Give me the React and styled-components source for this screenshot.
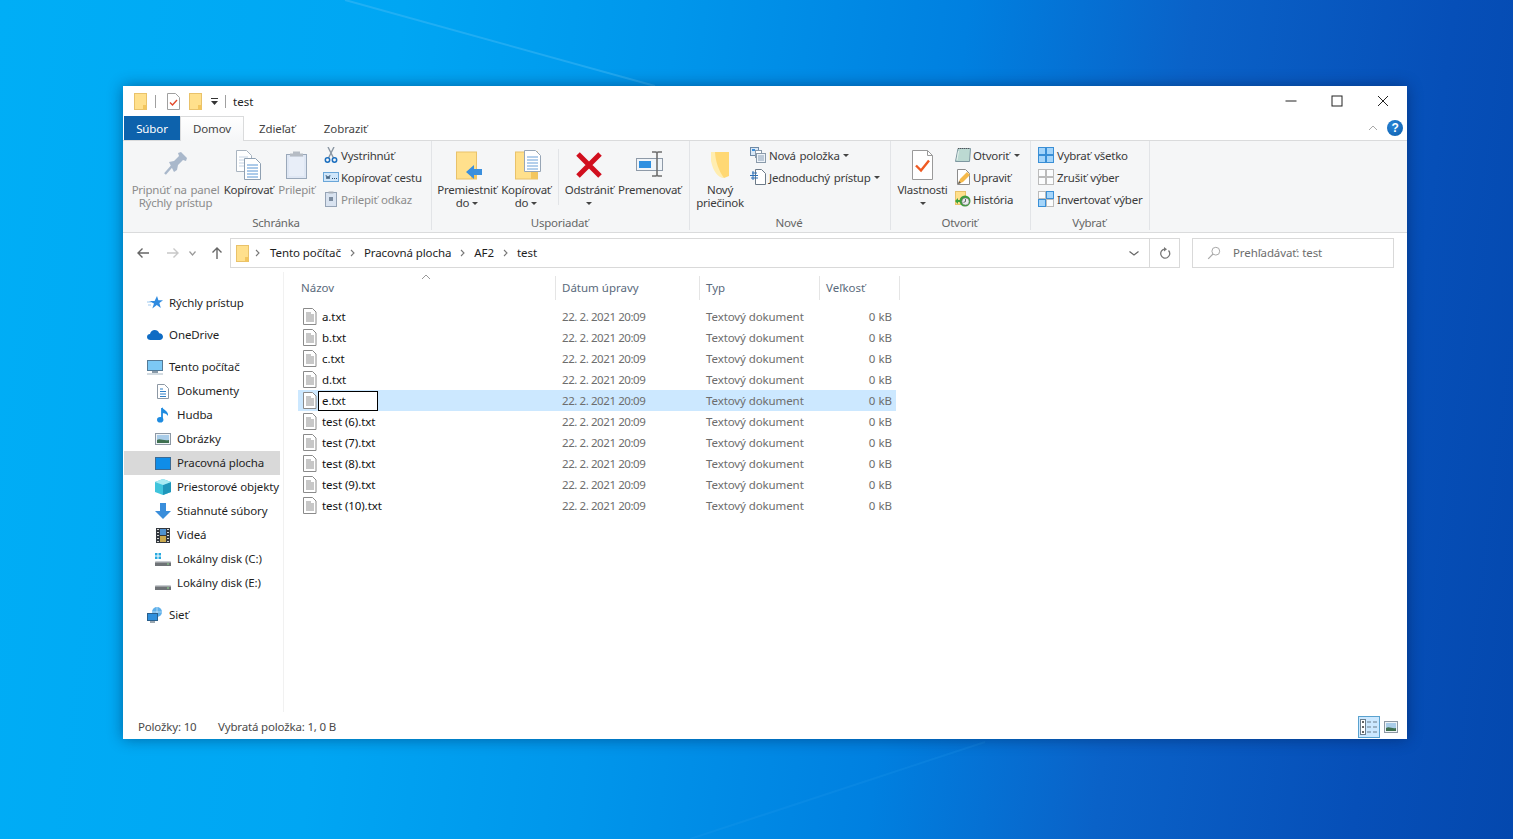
import React from 'react';
import styled, { createGlobalStyle } from 'styled-components';

const Global = createGlobalStyle`
  html, body { margin: 0; padding: 0; height: 100%; overflow: hidden; }
  body { font-family: "Noto Sans", "Open Sans", sans-serif; font-size: 11.5px; }
  * { box-sizing: border-box; }
`;

const Desktop = styled.div`
  position: relative;
  width: 1513px;
  height: 839px;
  padding: 86px 106px 100px 123px;
  background: linear-gradient(97deg, #00aef6 0%, #00a6f3 25%, #0096eb 42%, #0080e0 60%, #0a62c8 74%, #064fb8 90%, #0448ae 100%);
`;
const Rays = styled.svg`
  position: absolute;
  inset: 0;
  pointer-events: none;
`;
const Window = styled.div`
  position: relative;
  height: 653px;
  background: #fff;
  display: flex;
  flex-direction: column;
  box-shadow: 0 0 14px rgba(0, 20, 60, 0.45);
`;

/* Title bar */
const TitleBar = styled.div`
  height: 30px;
  display: flex;
  align-items: center;
  padding-left: 11px;
`;
const QatSep = styled.span`
  width: 1px;
  height: 13px;
  background: #a0a0a0;
  margin: 0 ${p => p.$r}px 0 ${p => p.$l}px;
`;
const QatItem = styled.span`
  display: flex;
  margin-right: ${p => p.$mr || 0}px;
`;
const TitleText = styled.span`
  color: #222;
`;
const WinControls = styled.div`
  margin-left: auto;
  display: flex;
  padding-right: 1px;
`;
const WinBtn = styled.span`
  width: 46px;
  height: 30px;
  display: flex;
  align-items: center;
  justify-content: center;
`;

/* Tabs */
const TabRow = styled.div`
  height: 25px;
  display: flex;
  padding-left: 1px;
  border-bottom: 1px solid #dadbdc;
  letter-spacing: -0.1px;
`;
const FileTab = styled.div`
  width: 56px;
  height: 24px;
  background: #0d62ac;
  color: #fff;
  display: flex;
  align-items: center;
  justify-content: center;
`;
const Tab = styled.div`
  width: ${p => p.$w}px;
  height: ${p => (p.$active ? 25 : 24)}px;
  display: flex;
  align-items: center;
  justify-content: center;
  color: #444;
  background: #fff;
  ${p => p.$active && `
    padding-bottom: 2px;
    border: 1px solid #dadbdc;
    border-bottom: 0;
    background: linear-gradient(#fff, #f5f6f7);
  `}
`;
const TabRight = styled.div`
  margin-left: auto;
  display: flex;
  align-items: center;
  gap: 9px;
  padding-right: 4px;
`;
const HelpBadge = styled.span`
  width: 16px;
  height: 16px;
  border-radius: 50%;
  background: radial-gradient(circle at 40% 35%, #2a86d8, #0b5cab);
  color: #fff;
  font: bold 12px/16px "Liberation Sans", sans-serif;
  text-align: center;
`;

/* Ribbon */
const Ribbon = styled.div`
  height: 92px;
  display: flex;
  background: #f5f6f7;
  border-bottom: 1px solid #dadbdc;
  letter-spacing: -0.25px;
  word-spacing: 1px;
`;
const Group = styled.div`
  width: ${p => p.$w}px;
  display: flex;
  flex-direction: column;
  border-right: 1px solid #e2e4e7;
  margin-bottom: 2px;
`;
const GroupBody = styled.div`
  height: 74px;
  display: flex;
  padding-left: ${p => p.$pl}px;
`;
const GroupLabel = styled.div`
  height: 15px;
  line-height: 15px;
  padding-right: 2px;
  text-align: center;
  color: #666;
`;
const BigButton = styled.div`
  width: ${p => p.$w}px;
  padding-top: 6px;
  display: flex;
  flex-direction: column;
  align-items: center;
  color: ${p => (p.$off ? '#8c8c8c' : '#3b3b3b')};
  line-height: 13px;
  text-align: center;
  white-space: nowrap;
`;
const BigIcon = styled.div`
  height: 36px;
  display: flex;
  align-items: center;
  justify-content: center;
`;
const RibbonSep = styled.span`
  width: 1px;
  height: 56px;
  margin: 8px 2px 0 3px;
  background: #e2e4e7;
`;
const SmallCol = styled.div`
  margin: 3px 0 0 ${p => p.$ml || 0}px;
  display: flex;
  flex-direction: column;
`;
const SmallRow = styled.div`
  height: 22px;
  display: flex;
  align-items: center;
  gap: ${p => p.$gap || 2}px;
  padding-left: 1px;
  color: ${p => (p.$off ? '#8c8c8c' : '#3b3b3b')};
  white-space: nowrap;
`;
const Caret = styled.span`
  display: inline-block;
  width: 0;
  height: 0;
  border-left: 3px solid transparent;
  border-right: 3px solid transparent;
  border-top: 3px solid #444;
  margin-left: ${p => p.$ml ?? 3}px;
  vertical-align: 2px;
`;

/* Address row */
const AddressRow = styled.div`
  height: 39px;
  display: flex;
  align-items: flex-start;
  padding: 5px 13px 0 5px;
`;
const NavBtn = styled.span`
  width: ${p => p.$w}px;
  height: 30px;
  margin-right: ${p => p.$mr || 0}px;
  display: flex;
  align-items: center;
  justify-content: center;
`;
const AddressBox = styled.div`
  width: 950px;
  height: 30px;
  display: flex;
  align-items: center;
  border: 1px solid #d9d9d9;
  padding-left: 5px;
  color: #1e1e1e;
  letter-spacing: -0.08px;
`;
const CrumbText = styled.span`
  margin-bottom: 2px;
`;
const ChevronCell = styled.span`
  width: ${p => p.$w || 23}px;
  padding-right: ${p => p.$pr || 0}px;
  display: flex;
  justify-content: center;
`;
const DropCell = styled.span`
  margin-left: auto;
  width: 30px;
  height: 28px;
  display: flex;
  align-items: center;
  justify-content: center;
`;
const RefreshCell = styled.span`
  width: 30px;
  height: 28px;
  display: flex;
  align-items: center;
  justify-content: center;
  border-left: 1px solid #d9d9d9;
`;
const SearchBox = styled.div`
  width: 202px;
  height: 30px;
  margin-left: 12px;
  border: 1px solid #d9d9d9;
  display: flex;
  align-items: center;
  gap: 12px;
  padding-left: 14px;
  color: #6d6d6d;
  letter-spacing: -0.1px;
`;

/* Main */
const Main = styled.div`
  flex: 1;
  display: flex;
  min-height: 0;
`;
const Nav = styled.nav`
  width: 161px;
  padding-top: 19px;
  border-right: 1px solid #f1f1f1;
  margin-bottom: 3px;
`;
const NavGroup = styled.div`
  margin-bottom: 8px;
`;
const NavItem = styled.div`
  height: 24px;
  margin: 0 3px 0 1px;
  padding: 0 0 2px ${p => (p.$sub ? 31 : 23)}px;
  display: flex;
  align-items: center;
  gap: 6px;
  color: #1f1f1f;
  letter-spacing: -0.1px;
  white-space: nowrap;
  background: ${p => (p.$selected ? '#d9d9d9' : 'transparent')};
`;
const NavIconBox = styled.span`
  width: 16px;
  height: 16px;
  margin-top: 2px;
  display: flex;
  align-items: center;
  justify-content: center;
  flex: none;
`;
const Content = styled.div`
  position: relative;
  flex: 1;
  padding: 4px 0 0 14px;
`;
const ListHeader = styled.div`
  display: grid;
  grid-template-columns: 258px 144px 120px 80px;
  width: 602px;
  height: 24px;
  margin-bottom: 6px;
`;
const HeaderCell = styled.div`
  padding: 0 0 2px ${p => p.$pl}px;
  display: flex;
  align-items: center;
  color: #5a6a7c;
  border-right: 1px solid #e5e5e5;
`;
const SortMark = styled.svg`
  position: absolute;
  left: 137px;
  top: 2px;
`;
const FileRow = styled.div`
  display: grid;
  grid-template-columns: 258px 144px 120px 76px;
  width: 598px;
  height: 21px;
  align-items: center;
  background: ${p => (p.$selected ? '#cce8ff' : 'transparent')};
`;
const NameCell = styled.div`
  display: flex;
  align-items: center;
  gap: 5px;
  padding-left: 5px;
  color: #111;
  letter-spacing: -0.08px;
`;
const NameEditor = styled.span`
  width: 60px;
  height: 20px;
  margin-left: -4px;
  padding-left: 3px;
  line-height: 18px;
  background: #fff;
  border: 1px solid #000;
  color: #111;
`;
const DetailCell = styled.div`
  padding-left: 6px;
  color: #6d6d6d;
  letter-spacing: ${p => p.$ls || 0}px;
`;
const SizeCell = styled.div`
  padding-right: 4px;
  text-align: right;
  color: #6d6d6d;
`;

/* Status bar */
const StatusBar = styled.div`
  height: 24px;
  display: flex;
  align-items: center;
  padding: 0 9px 0 15px;
  color: #4a4a4a;
  letter-spacing: -0.17px;
`;
const StatusText = styled.span`
  width: ${p => p.$w || 'auto'};
  margin-bottom: 2px;
`;
const ViewSwitch = styled.div`
  margin-left: auto;
  display: flex;
  align-items: center;
  gap: 4px;
`;
const ViewBtn = styled.span`
  width: ${p => (p.$active ? 22 : 14)}px;
  height: 22px;
  display: flex;
  align-items: center;
  justify-content: center;
  background: ${p => (p.$active ? '#cce8ff' : 'transparent')};
  border: ${p => (p.$active ? '1px solid #5aa2cf' : '0')};
`;

/* Icons: each one is a small drawing on its own grid */
const Svg = ({ w, h = w, children }) => (
  <svg width={w} height={h} viewBox={`0 0 ${w} ${h}`} fill="none" shapeRendering="geometricPrecision">{children}</svg>
);

const Y = { fill: '#ffe08c', stroke: '#e9c26a' };

const FolderSmall = () => (
  <Svg w={13} h={17}>
    <rect x="0.5" y="0.5" width="12" height="16" {...Y} />
    <path d="M9 12h3.5v4.5H9z" fill="#f3c65e" />
  </Svg>
);
const QatProps = () => (
  <Svg w={13} h={17}>
    <path d="M.5.5h8l4 4v12H.5z" fill="#fff" stroke="#a0a0a0" />
    <path d="M3 9.5l2.5 2.5L10 7" stroke="#e2482a" strokeWidth="1.4" />
  </Svg>
);
const QatMenu = () => (
  <Svg w={7} h={9}>
    <path d="M0 1.5h7" stroke="#333" />
    <path d="M0 4h7L3.5 8z" fill="#333" />
  </Svg>
);
const Minimize = () => <Svg w={12} h={12}><path d="M.5 6h11" stroke="#222" /></Svg>;
const Maximize = () => <Svg w={12} h={12}><rect x="1" y="1" width="10" height="10" stroke="#222" /></Svg>;
const CloseX = () => <Svg w={12} h={12}><path d="M1 1l10 10M11 1L1 11" stroke="#222" /></Svg>;
const ChevronUp = () => <Svg w={10} h={6}><path d="M1 5l4-4 4 4" stroke="#a8a8a8" /></Svg>;

const Pin = () => (
  <Svg w={32}>
    <path d="M5 25l7-8" stroke="#a9b8cb" strokeWidth="2.4" />
    <path d="M9 13l5-1 5-5-1-3 3-1 6 6-1 3-3-1-5 5-1 5-3 2z" fill="#a9b8cb" />
  </Svg>
);
const CopyBig = () => (
  <Svg w={26} h={30}>
    <path d="M.5.5h10l5 5v16H.5z" fill="#fff" stroke="#a9b4c0" />
    <path d="M3 7h9M3 10h9M3 13h9M3 16h6" stroke="#c4d2e2" />
    <path d="M8.5 8.5h11l5 5v16h-16z" fill="#fff" stroke="#8fa0b2" />
    <path d="M11 15h11M11 18h11M11 21h11M11 24h11M11 27h11" stroke="#5b96d4" />
  </Svg>
);
const PasteBig = () => (
  <Svg w={21} h={28}>
    <rect x="0.5" y="3.5" width="20" height="24" fill="#dfe7f4" stroke="#9aa8ba" />
    <path d="M3 6h15v19H3z" fill="#e8eef8" />
    <path d="M7 .5h7v2h3v3H4v-3h3z" fill="#b6bcc4" />
  </Svg>
);
const Scissors = () => (
  <Svg w={16}>
    <path d="M5 0l5.5 11M11 0L5.5 11" stroke="#8b97a3" strokeWidth="1.4" />
    <circle cx="4.5" cy="13" r="2.2" stroke="#1c6fbf" strokeWidth="1.5" />
    <circle cx="11.5" cy="13" r="2.2" stroke="#1c6fbf" strokeWidth="1.5" />
  </Svg>
);
const CopyPath = () => (
  <Svg w={16}>
    <rect x="0.5" y="3.5" width="15" height="9" fill="#cfe6fa" stroke="#6aa6d8" />
    <path d="M3 6l1 4 1-3 1 3 1-4" stroke="#2a4a6a" strokeWidth=".8" />
    <path d="M9 9.5h1M11 9.5h1M13 9.5h1" stroke="#2a4a6a" />
  </Svg>
);
const PasteLink = () => (
  <Svg w={16}>
    <rect x="2.5" y="1.5" width="11" height="14" fill="#d9e3f0" stroke="#95a3b5" />
    <path d="M5.5.5h5v2h-5z" fill="#a9b0b9" />
    <path d="M6 6h4v4H6z" fill="#7c8c9f" />
  </Svg>
);
const MoveTo = () => (
  <Svg w={30} h={30}>
    <rect x="4.5" y="2" width="20" height="27" {...Y} />
    <path d="M19 23h5.5v6H19z" fill="#f3c65e" />
    <path d="M14 22l8-7v4h8v6h-8v4z" fill="#3a8fdd" />
  </Svg>
);
const CopyTo = () => (
  <Svg w={30} h={30}>
    <rect x="4.5" y="2" width="22" height="27" {...Y} />
    <path d="M20 22h6.5v7H20z" fill="#f3c65e" />
    <path d="M13.5.5h11l5 5v16h-16z" fill="#fff" stroke="#98a6b6" />
    <path d="M16 7h11M16 10h11M16 13h11M16 16h11M16 19h11" stroke="#6aa0d8" />
  </Svg>
);
const DeleteX = () => (
  <Svg w={28}>
    <path d="M3 3l22 22M25 3L3 25" stroke="#d10f1e" strokeWidth="5" />
  </Svg>
);
const Rename = () => (
  <Svg w={30}>
    <rect x="1.5" y="8.5" width="26" height="12" fill="#f0f4f8" stroke="#8e9aa8" />
    <rect x="4" y="11" width="12" height="7" fill="#2e8fe0" />
    <path d="M17 2h4l1 1 1-1h4M22 3v22M17 26h4l1-1 1 1h4" stroke="#6f6f6f" strokeWidth="1.6" />
  </Svg>
);
const NewFolder = () => (
  <Svg w={20} h={28}>
    <path d="M3 1h16v24l-5 2C8 25 4 16 3 8z" fill="#ffd874" />
    <path d="M1 1h4c.5 10 4 19 9 26C8 27 3 20 1 10z" fill="#ffedb0" />
  </Svg>
);
const NewItem = () => (
  <Svg w={16}>
    <rect x="0.5" y="0.5" width="8" height="8" fill="#d9e8f7" stroke="#6f8aa6" />
    <rect x="2" y="2" width="3" height="2" fill="#3a8fdd" />
    <rect x="5.5" y="3.5" width="6" height="7" fill="#fff" stroke="#8a9aaa" />
    <rect x="6.5" y="6.5" width="9" height="9" fill="#eef3f8" stroke="#8a9aaa" />
    <path d="M8 9h6M8 11h6M8 13h6" stroke="#8aa0b8" />
  </Svg>
);
const EasyAccess = () => (
  <Svg w={16}>
    <path d="M5.5.5h6l4 4v11h-10z" fill="#fff" stroke="#6c7a88" />
    <path d="M0 6.5h8M1 9h7M2 4h5" stroke="#2c6fb6" />
    <path d="M3 2v9" stroke="#2c6fb6" />
  </Svg>
);
const PropsBig = () => (
  <Svg w={21} h={30}>
    <path d="M.5.5h15l5 5v24H.5z" fill="#fff" stroke="#9a9a9a" />
    <path d="M15.5.5v5h5" stroke="#9a9a9a" />
    <path d="M4 15.5l5 5 8-10" stroke="#ef5a22" strokeWidth="2.4" />
  </Svg>
);
const OpenIcon = () => (
  <Svg w={16}>
    <path d="M3 1.5h12.5l-1 13H.5z" fill="#bcd9d2" stroke="#7d97a0" />
    <path d="M3 1.5h12" stroke="#555" strokeDasharray="1 1" />
    <path d="M3.5 4L2 13" stroke="#e6f2ee" />
  </Svg>
);
const EditIcon = () => (
  <Svg w={16}>
    <path d="M2.5.5h8l4 4v11h-12z" fill="#fff" stroke="#8c8c8c" />
    <path d="M3 15l2-5 7-7 3 3-7 7z" fill="#f5b94a" />
    <path d="M3 15l1-3 2 2z" fill="#555" />
  </Svg>
);
const HistoryIcon = () => (
  <Svg w={16}>
    <rect x="0.5" y="0.5" width="10" height="13" {...Y} />
    <path d="M3 7l-3 3 3 3v-2h2V9H3z" fill="#3ca43c" />
    <circle cx="10" cy="10" r="5.5" fill="#3e9c3e" />
    <circle cx="10.5" cy="10.5" r="3.6" fill="#e9edf0" stroke="#777" strokeWidth=".6" />
    <path d="M10.5 8v2.6l-2 .8" stroke="#444" strokeWidth=".8" />
  </Svg>
);
const Tile = ({ x, y, on }) => (
  <rect x={x + 0.5} y={y + 0.5} width="7" height="7" fill={on ? '#a5d5fa' : '#fbfcfd'} stroke={on ? '#3a8fd6' : '#bbb'} />
);
const Tiles = ({ on }) => (
  <Svg w={16}>
    <Tile x={0} y={0} on={on[0]} />
    <Tile x={8} y={0} on={on[1]} />
    <Tile x={0} y={8} on={on[2]} />
    <Tile x={8} y={8} on={on[3]} />
  </Svg>
);

const ArrowLeft = ({ c }) => <Svg w={14} h={12}><path d="M13 6H2M6.5 1.5L2 6l4.5 4.5" stroke={c} strokeWidth="1.4" /></Svg>;
const ArrowRight = ({ c }) => <Svg w={14} h={12}><path d="M1 6h11M7.5 1.5L12 6l-4.5 4.5" stroke={c} strokeWidth="1.4" /></Svg>;
const ArrowUp = () => <Svg w={12} h={14}><path d="M6 13V2M1.5 6.5L6 2l4.5 4.5" stroke="#666" strokeWidth="1.4" /></Svg>;
const ChevDown = ({ c = '#888', w = 8 }) => <Svg w={w} h={5}><path d={`M.5 .5L${w / 2} 4l${w / 2 - 0.5}-3.5`} stroke={c} strokeWidth="1.2" /></Svg>;
const ChevRight = () => <Svg w={5} h={8}><path d="M1 1l3 3-3 3" stroke="#777" strokeWidth="1.1" /></Svg>;
const Refresh = () => <Svg w={12} h={13}><path d="M9.5 3.5a4.5 4.5 0 1 1-3.5-1.4" stroke="#777" strokeWidth="1.3" /><path d="M5 0l3 2.2L5 4.4z" fill="#777" /></Svg>;
const SearchGlass = () => <Svg w={14} h={14}><circle cx="8.8" cy="5.2" r="3.9" stroke="#a8a8a8" /><path d="M6 8L1.2 12.8" stroke="#a8a8a8" strokeWidth="1.2" /></Svg>;

const Star = () => <Svg w={16}><path d="M10 1l1.4 4.2H16l-3.6 2.9 1.4 4.9-4-3-4.5 3.5 1.7-5L2 6h5.6z" fill="#2f8be0" /><path d="M0 7h4M1 10h3" stroke="#9fcaf0" /></Svg>;
const Cloud = () => <Svg w={16} h={12}><path d="M3.5 11C1.5 11 0 9.8 0 8c0-1.7 1.3-3 3-3 .6-2.5 2.5-4 4.6-4 2.2 0 3.8 1.2 4.6 3.2 2.2 0 3.8 1.6 3.8 3.5 0 1.9-1.4 3.3-3.3 3.3z" fill="#0f6cc4" /></Svg>;
const Pc = () => <Svg w={16}><rect x="0.5" y="1.5" width="15" height="10" fill="#7cc8f5" stroke="#557a96" /><path d="M5 13h6" stroke="#8a9aa8" strokeWidth="2" /><path d="M0 15h16" stroke="#a8b8c4" /></Svg>;
const DocNav = () => <Svg w={12} h={15}><path d="M.5.5h7l4 4v10H.5z" fill="#fff" stroke="#8d98a4" /><path d="M3 5h3M3 7.5h6M3 10h6M3 12.5h6" stroke="#2f7fc7" /></Svg>;
const Music = () => <Svg w={12} h={16}><path d="M5 1v11" stroke="#1e8be0" strokeWidth="1.8" /><path d="M5 0c1 3 7 4 6 9-.8-2-3.5-3-6-3z" fill="#1e8be0" /><ellipse cx="3.2" cy="12.8" rx="3.2" ry="2.8" fill="#1e8be0" /></Svg>;
const Picture = ({ size = 16, h = 12 }) => <Svg w={size} h={h}><rect x="0.5" y="0.5" width={size - 1} height={h - 1} fill="#eef3f7" stroke="#8d98a4" /><rect x="2" y="2" width={size - 4} height={h - 4} fill="#a9cce8" /><path d={`M2 ${h - 2}V${h / 2 + 1}c3-2 6 1 ${size - 4} 0V${h - 2}z`} fill="#3f7050" /></Svg>;
const DesktopIcon = () => <Svg w={16} h={13}><rect x="0.5" y="0.5" width="15" height="12" fill="#0f8de8" stroke="#3a6a94" /></Svg>;
const Cube = () => <Svg w={16}><path d="M8 0l8 3v10l-8 3-8-3V3z" fill="#3fc4dc" /><path d="M8 6l8-3v10l-8 3z" fill="#1f97bb" /><path d="M8 0l8 3-8 3-8-3z" fill="#a8ebf3" /></Svg>;
const Download = () => <Svg w={16}><path d="M5 0h6v8h5l-8 8-8-8h5z" fill="#3a8edb" /></Svg>;
const Video = () => <Svg w={14} h={15}><rect width="14" height="15" fill="#33383e" /><path d="M1 1.5h2M1 4.5h2M1 7.5h2M1 10.5h2M1 13.5h2M11 1.5h2M11 4.5h2M11 7.5h2M11 10.5h2M11 13.5h2" stroke="#d8d8d8" /><rect x="4" y="1" width="6" height="6" fill="#4f92d0" /><rect x="4" y="8" width="6" height="6" fill="#c9a94f" /></Svg>;
const Disk = ({ win }) => (
  <Svg w={16} h={14}>
    {win && <path d="M0 1h2.5v2.5H0zM3.5 1H6v2.5H3.5zM0 4.5h2.5V7H0zM3.5 4.5H6V7H3.5z" fill="#27a9e0" />}
    <path d="M1 9h14l1 2v3H0v-3z" fill="#6f7377" />
    <path d="M1 9h14l.5 1.5H.5z" fill="#c8ccd0" />
    <path d="M12 12h2" stroke="#8fe08f" />
  </Svg>
);
const Network = () => (
  <Svg w={16}>
    <circle cx="10" cy="5" r="5" fill="#5fb0ea" />
    <path d="M5 5h10M10 0v10" stroke="#e4f2fb" strokeWidth=".6" />
    <rect x="0.5" y="6.5" width="10" height="7" fill="#2f8fdc" stroke="#2a5f8c" />
    <path d="M3 15h5" stroke="#70828f" strokeWidth="1.4" />
  </Svg>
);
const FileIcon = () => (
  <Svg w={14} h={17}>
    <path d="M.5.5h9l3.5 3.5v12.5H.5z" fill="#fff" stroke="#8a8a8a" />
    <path d="M3 5h5M3 7h8M3 9h8M3 11h8M3 13h8" stroke="#8f8f8f" />
  </Svg>
);
const DetailsView = () => (
  <Svg w={18} h={16}>
    <rect x="0.5" y="0.5" width="5" height="15" fill="#fff" stroke="#6b7d8c" />
    <path d="M2 3h2M2 8h2M2 13h2" stroke="#333" strokeWidth="1.4" />
    <path d="M7 3h4M13 3h4M7 8h4M13 8h4M7 13h4M13 13h4" stroke="#6b7d8c" />
  </Svg>
);

const navGroups = [
  [{ icon: <Star />, label: 'Rýchly prístup' }],
  [{ icon: <Cloud />, label: 'OneDrive' }],
  [
    { icon: <Pc />, label: 'Tento počítač' },
    { icon: <DocNav />, label: 'Dokumenty', sub: true },
    { icon: <Music />, label: 'Hudba', sub: true },
    { icon: <Picture />, label: 'Obrázky', sub: true },
    { icon: <DesktopIcon />, label: 'Pracovná plocha', sub: true, selected: true },
    { icon: <Cube />, label: 'Priestorové objekty', sub: true },
    { icon: <Download />, label: 'Stiahnuté súbory', sub: true },
    { icon: <Video />, label: 'Videá', sub: true },
    { icon: <Disk win />, label: 'Lokálny disk (C:)', sub: true },
    { icon: <Disk />, label: 'Lokálny disk (E:)', sub: true },
  ],
  [{ icon: <Network />, label: 'Sieť' }],
];

const files = ['a.txt', 'b.txt', 'c.txt', 'd.txt', 'e.txt', 'test (6).txt', 'test (7).txt', 'test (8).txt', 'test (9).txt', 'test (10).txt'];

export default function App() {
  return (
    <Desktop>
      <Global />
      <Rays width="1513" height="839" viewBox="0 0 1513 839">
        <path d="M345 0L655 86" stroke="#4fbdf5" strokeOpacity=".4" strokeWidth="2" />
        <path d="M985 742L690 839" stroke="#2fa0ee" strokeOpacity=".18" strokeWidth="2" />
      </Rays>
      <Window>
        <TitleBar>
          <QatItem><FolderSmall /></QatItem>
          <QatSep $l={8} $r={11} />
          <QatItem $mr={9}><QatProps /></QatItem>
          <QatItem $mr={9}><FolderSmall /></QatItem>
          <QatItem><QatMenu /></QatItem>
          <QatSep $l={7} $r={7} />
          <TitleText>test</TitleText>
          <WinControls>
            <WinBtn><Minimize /></WinBtn>
            <WinBtn><Maximize /></WinBtn>
            <WinBtn><CloseX /></WinBtn>
          </WinControls>
        </TitleBar>

        <TabRow>
          <FileTab>Súbor</FileTab>
          <Tab $active $w={64}>Domov</Tab>
          <Tab $w={66}>Zdieľať</Tab>
          <Tab $w={71}>Zobraziť</Tab>
          <TabRight>
            <ChevronUp />
            <HelpBadge>?</HelpBadge>
          </TabRight>
        </TabRow>

        <Ribbon>
          <Group $w={309}>
            <GroupBody $pl={7}>
              <BigButton $w={91} $off><BigIcon><Pin /></BigIcon>Pripnúť na panel<br />Rýchly prístup</BigButton>
              <BigButton $w={55}><BigIcon><CopyBig /></BigIcon>Kopírovať</BigButton>
              <BigButton $w={41} $off><BigIcon><PasteBig /></BigIcon>Prilepiť</BigButton>
              <SmallCol $ml={5}>
                <SmallRow><Scissors />Vystrihnúť</SmallRow>
                <SmallRow><CopyPath />Kopírovať cestu</SmallRow>
                <SmallRow $off><PasteLink />Prilepiť odkaz</SmallRow>
              </SmallCol>
            </GroupBody>
            <GroupLabel>Schránka</GroupLabel>
          </Group>

          <Group $w={258}>
            <GroupBody $pl={5}>
              <BigButton $w={60}><BigIcon><MoveTo /></BigIcon>Premiestniť<span>do<Caret /></span></BigButton>
              <BigButton $w={58}><BigIcon><CopyTo /></BigIcon>Kopírovať<span>do<Caret /></span></BigButton>
              <RibbonSep />
              <BigButton $w={56}><BigIcon><DeleteX /></BigIcon>Odstrániť<span><Caret $ml={0} /></span></BigButton>
              <BigButton $w={65}><BigIcon><Rename /></BigIcon>Premenovať</BigButton>
            </GroupBody>
            <GroupLabel>Usporiadať</GroupLabel>
          </Group>

          <Group $w={201}>
            <GroupBody $pl={5}>
              <BigButton $w={50}><BigIcon><NewFolder /></BigIcon>Nový<br />priečinok</BigButton>
              <SmallCol $ml={4}>
                <SmallRow $gap={3}><NewItem />Nová položka<Caret $ml={0} /></SmallRow>
                <SmallRow $gap={3}><EasyAccess />Jednoduchý prístup<Caret $ml={0} /></SmallRow>
              </SmallCol>
            </GroupBody>
            <GroupLabel>Nové</GroupLabel>
          </Group>

          <Group $w={140}>
            <GroupBody $pl={4}>
              <BigButton $w={55}><BigIcon><PropsBig /></BigIcon>Vlastnosti<span><Caret $ml={0} /></span></BigButton>
              <SmallCol $ml={4}>
                <SmallRow><OpenIcon />Otvoriť<Caret /></SmallRow>
                <SmallRow><EditIcon />Upraviť</SmallRow>
                <SmallRow><HistoryIcon />História</SmallRow>
              </SmallCol>
            </GroupBody>
            <GroupLabel>Otvoriť</GroupLabel>
          </Group>

          <Group $w={119}>
            <GroupBody $pl={0}>
              <SmallCol $ml={6}>
                <SmallRow $gap={3}><Tiles on={[1, 1, 1, 1]} />Vybrať všetko</SmallRow>
                <SmallRow $gap={3}><Tiles on={[0, 0, 0, 0]} />Zrušiť výber</SmallRow>
                <SmallRow $gap={3}><Tiles on={[0, 1, 1, 0]} />Invertovať výber</SmallRow>
              </SmallCol>
            </GroupBody>
            <GroupLabel>Vybrať</GroupLabel>
          </Group>
        </Ribbon>

        <AddressRow>
          <NavBtn $w={30}><ArrowLeft c="#666" /></NavBtn>
          <NavBtn $w={30}><ArrowRight c="#c8c8c8" /></NavBtn>
          <NavBtn $w={8} $mr={8}><ChevDown c="#999" w={7} /></NavBtn>
          <NavBtn $w={26}><ArrowUp /></NavBtn>
          <AddressBox>
            <FolderSmall />
            <ChevronCell $w={21} $pr={4}><ChevRight /></ChevronCell>
            <CrumbText>Tento počítač</CrumbText>
            <ChevronCell><ChevRight /></ChevronCell>
            <CrumbText>Pracovná plocha</CrumbText>
            <ChevronCell><ChevRight /></ChevronCell>
            <CrumbText>AF2</CrumbText>
            <ChevronCell><ChevRight /></ChevronCell>
            <CrumbText>test</CrumbText>
            <DropCell><ChevDown c="#666" w={10} /></DropCell>
            <RefreshCell><Refresh /></RefreshCell>
          </AddressBox>
          <SearchBox><SearchGlass /><CrumbText>Prehľadávať: test</CrumbText></SearchBox>
        </AddressRow>

        <Main>
          <Nav>
            {navGroups.map((group, i) => (
              <NavGroup key={i}>
                {group.map(item => (
                  <NavItem key={item.label} $sub={item.sub} $selected={item.selected}>
                    <NavIconBox>{item.icon}</NavIconBox>
                    {item.label}
                  </NavItem>
                ))}
              </NavGroup>
            ))}
          </Nav>
          <Content>
            <ListHeader>
              <HeaderCell $pl={3}>Názov</HeaderCell>
              <HeaderCell $pl={6}>Dátum úpravy</HeaderCell>
              <HeaderCell $pl={6}>Typ</HeaderCell>
              <HeaderCell $pl={6}>Veľkosť</HeaderCell>
            </ListHeader>
            <SortMark width="10" height="6" viewBox="0 0 10 6" fill="none"><path d="M1 5l4-4 4 4" stroke="#999" /></SortMark>
            {files.map(name => (
              <FileRow key={name} $selected={name === 'e.txt'}>
                <NameCell>
                  <FileIcon />
                  {name === 'e.txt' ? <NameEditor>{name}</NameEditor> : name}
                </NameCell>
                <DetailCell $ls={-0.42}>22. 2. 2021 20:09</DetailCell>
                <DetailCell $ls={-0.1}>Textový dokument</DetailCell>
                <SizeCell>0 kB</SizeCell>
              </FileRow>
            ))}
          </Content>
        </Main>

        <StatusBar>
          <StatusText $w="80px">Položky: 10</StatusText>
          <StatusText>Vybratá položka: 1, 0 B</StatusText>
          <ViewSwitch>
            <ViewBtn $active><DetailsView /></ViewBtn>
            <ViewBtn><Picture size={14} h={12} /></ViewBtn>
          </ViewSwitch>
        </StatusBar>
      </Window>
    </Desktop>
  );
}
